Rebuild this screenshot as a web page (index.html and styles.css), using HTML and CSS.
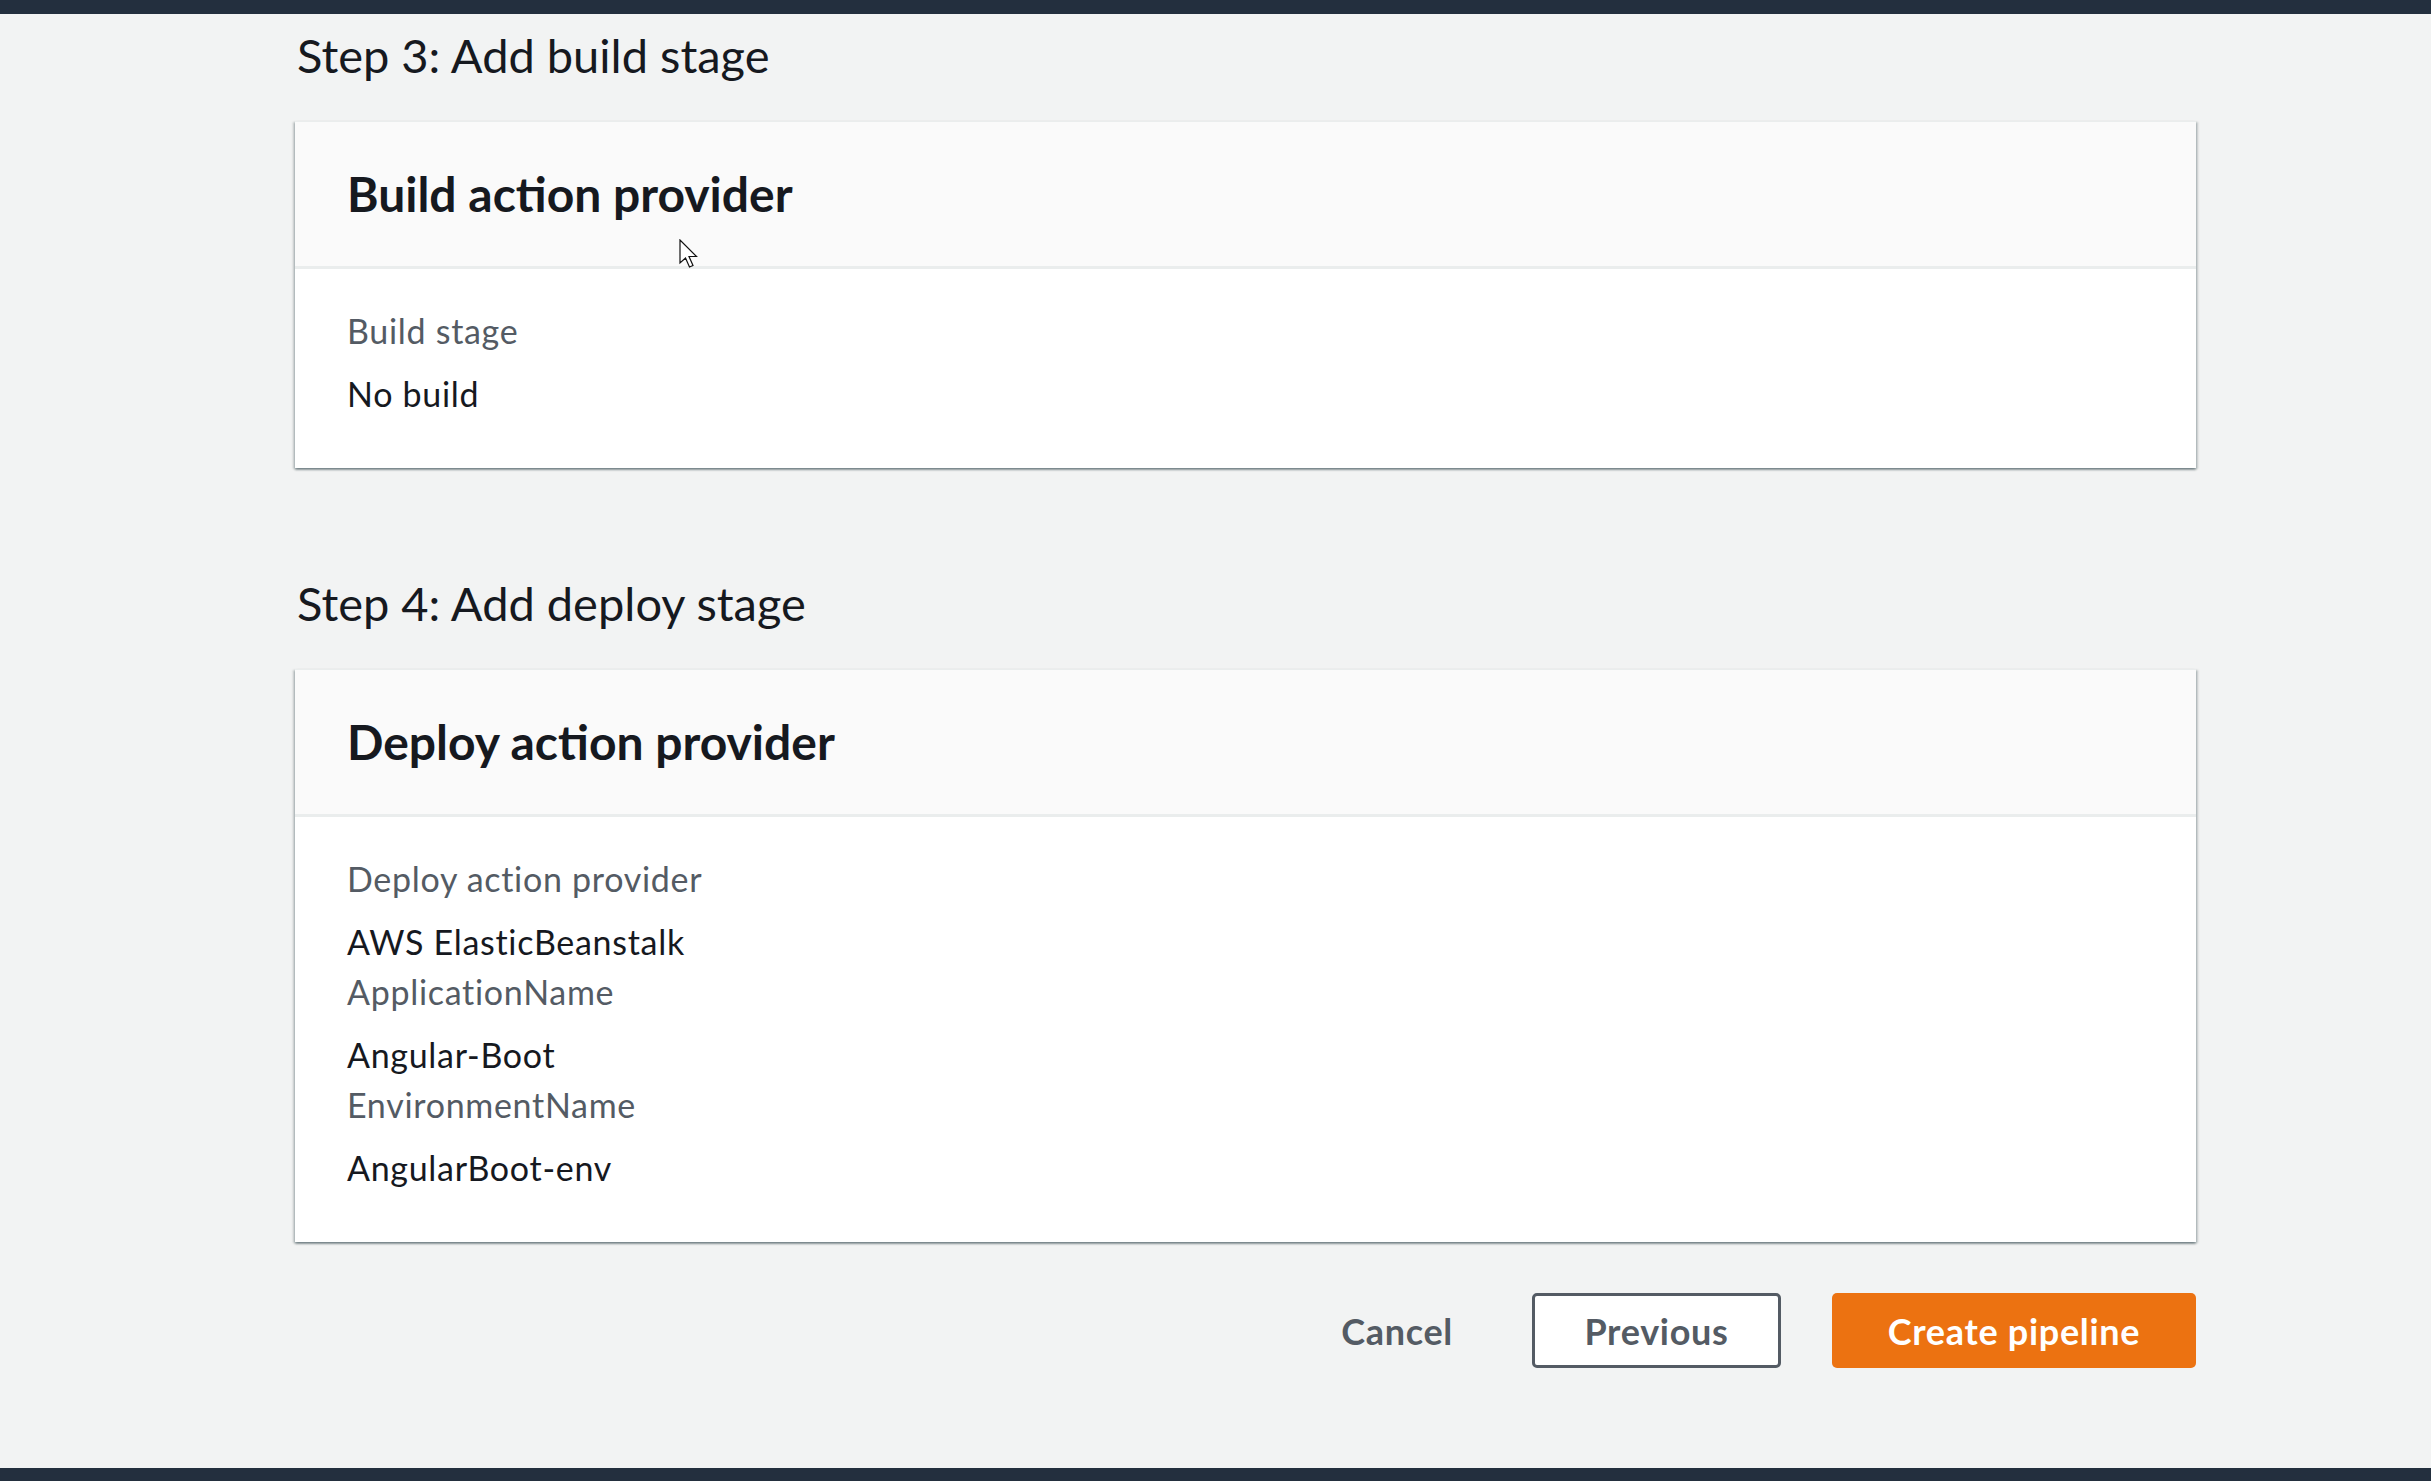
FILE: index.html
```html
<!DOCTYPE html>
<html lang="en">
<head>
<meta charset="utf-8">
<title>Review pipeline</title>
<link rel="stylesheet" href="styles.css">
</head>
<body>
<div class="topbar"></div>
<main class="page">
  <section class="step">
    <h2 class="step-title">Step 3: Add build stage</h2>
    <div class="card">
      <div class="card-header">
        <h3 class="card-title">Build action provider</h3>
      </div>
      <div class="card-body">
        <div class="field">
          <div class="label">Build stage</div>
          <div class="value">No build</div>
        </div>
      </div>
      <svg class="cursor" width="20" height="30" viewBox="0 0 20 30">
        <path d="M1 1 L1 24 L6.5 19 L10.5 28 L14 26.5 L10 17.5 L17.5 17.5 Z" fill="#fff" stroke="#111" stroke-width="1.2" stroke-linejoin="miter"/>
      </svg>
    </div>
  </section>

  <section class="step step-second">
    <h2 class="step-title">Step 4: Add deploy stage</h2>
    <div class="card">
      <div class="card-header">
        <h3 class="card-title">Deploy action provider</h3>
      </div>
      <div class="card-body">
        <div class="field">
          <div class="label">Deploy action provider</div>
          <div class="value">AWS ElasticBeanstalk</div>
        </div>
        <div class="field">
          <div class="label">ApplicationName</div>
          <div class="value">Angular-Boot</div>
        </div>
        <div class="field">
          <div class="label">EnvironmentName</div>
          <div class="value">AngularBoot-env</div>
        </div>
      </div>
    </div>
  </section>

  <div class="actions">
    <button class="btn btn-link">Cancel</button>
    <button class="btn btn-normal">Previous</button>
    <button class="btn btn-primary">Create pipeline</button>
  </div>
</main>
<div class="bottombar"></div>
</body>
</html>
```

FILE: styles.css
```css
html, body {
  margin: 0;
  padding: 0;
}
body {
  background: #f2f3f3;
  font-family: Lato, "Noto Sans", sans-serif;
  color: #16191f;
  height: 1481px;
  display: flex;
  flex-direction: column;
  overflow: hidden;
}
.topbar {
  height: 14px;
  background: #232f3e;
  flex: none;
}
.bottombar {
  height: 13px;
  background: #232f3e;
  flex: none;
}
.page {
  flex: 1;
  padding-left: 295px;
  width: 1901px;
}
.step-title {
  margin: 11px 0 36px 2px;
  font-size: 47px;
  line-height: 60px;
  font-weight: 400;
  color: #16191f;
}
.step-second .step-title {
  margin-top: 105px;
}
.card {
  position: relative;
  background: #fff;
  border-top: 1px solid #eaeded;
  box-shadow: 0 2px 2px 0 rgba(0, 28, 36, 0.35), 2px 1px 2px 0 rgba(0, 28, 36, 0.18), -2px 1px 2px 0 rgba(0, 28, 36, 0.18);
}
.card-header {
  background: #fafafa;
  height: 144px;
  display: flex;
  align-items: center;
  padding: 0 52px;
  border-bottom: 3px solid #eaeded;
}
.card-title {
  margin: 0;
  font-size: 48px;
  font-weight: 700;
  line-height: 60px;
  color: #16191f;
}
.card-body {
  padding: 37px 52px 49px;
}
.field {
  font-size: 34px;
  line-height: 50px;
  letter-spacing: 0.7px;
}
.label {
  color: #545b64;
  margin-bottom: 13px;
}
.value {
  color: #16191f;
}
.cursor {
  position: absolute;
  left: 384px;
  top: 117px;
}
.actions {
  display: flex;
  justify-content: flex-end;
  align-items: center;
  margin-top: 51px;
  gap: 51px;
}
.btn {
  font-family: Lato, "Noto Sans", sans-serif;
  font-size: 36px;
  letter-spacing: 0.7px;
  font-weight: 700;
  height: 75px;
  border-radius: 5px;
  cursor: pointer;
}
.btn-link {
  background: transparent;
  border: none;
  color: #545b64;
  padding: 0 28px;
}
.btn-normal {
  background: #fff;
  border: 3px solid #545b64;
  color: #545b64;
  width: 249px;
}
.btn-primary {
  background: #ec7211;
  border: none;
  color: #fff;
  width: 364px;
}
```
